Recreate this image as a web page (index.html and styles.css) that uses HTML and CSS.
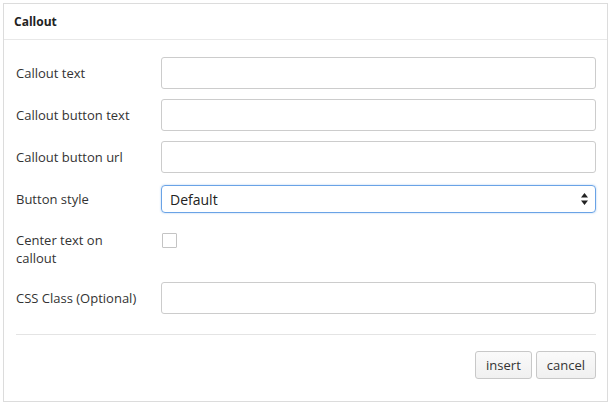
FILE: index.html
```html
<!DOCTYPE html>
<html lang="en">
<head>
  <meta charset="UTF-8" />
  <title>Callout</title>
  <link rel="stylesheet" href="styles.css">
</head>
<body>

<div class="panel">
  <div class="panel-header">Callout</div>

  <form class="panel-body">
    <div class="form-row">
      <label for="callout-text">Callout text</label>
      <input type="text" id="callout-text" />
    </div>

    <div class="form-row">
      <label for="button-text">Callout button text</label>
      <input type="text" id="button-text" />
    </div>

    <div class="form-row">
      <label for="button-url">Callout button url</label>
      <input type="text" id="button-url" />
    </div>

    <div class="form-row">
      <label for="button-style">Button style</label>
      <div class="select-box">
        <span>Default</span>
        <svg width="7" height="12" viewBox="0 0 7 12">
          <path d="M3.5 0 L7 4.5 L0 4.5 Z M3.5 12 L7 7.5 L0 7.5 Z" fill="#222"/>
        </svg>
      </div>
    </div>

    <div class="form-row top">
      <label for="center-text">Center text on callout</label>
      <span class="checkbox"></span>
    </div>

    <div class="form-row">
      <label for="css-class">CSS Class (Optional)</label>
      <input type="text" id="css-class" />
    </div>

    <div class="actions">
      <button type="button">insert</button>
      <button type="button">cancel</button>
    </div>
  </form>
</div>

</body>
</html>
```

FILE: styles.css
```css
* {
  box-sizing: border-box;
}

body {
  margin: 0;
  padding: 3px;
  background: #fff;
  font-family: 'Open Sans', 'Liberation Sans', sans-serif;
  color: #333;
}

.panel {
  width: 605px;
  height: 399px;
  border: 1px solid #dcdcdc;
  background: #fff;
}

.panel-header {
  height: 36px;
  padding: 0 10px;
  line-height: 35px;
  font-size: 12px;
  font-weight: 700;
  color: #222;
  border-bottom: 1px solid #e8e8e8;
}

.panel-body {
  padding: 17px 11px 0 12px;
}

.form-row {
  display: flex;
  align-items: center;
  margin-bottom: 10px;
}

.form-row.top {
  align-items: flex-start;
}

.form-row label {
  width: 130px;
  flex-shrink: 0;
  margin-right: 15px;
  padding: 6px 0;
  font-size: 13px;
  line-height: 18px;
}

.form-row.top label {
  padding-bottom: 5px;
}

.form-row input[type="text"] {
  flex: 1;
  height: 32px;
  border: 1px solid #ccc;
  border-radius: 3px;
  background: #fff;
  font: inherit;
}

.select-box {
  flex: 1;
  height: 28px;
  margin: 2px 0;
  display: flex;
  align-items: center;
  justify-content: space-between;
  padding: 0 7px 0 8px;
  border: 1px solid #6aa3e6;
  border-radius: 4px;
  box-shadow: 0 0 2px rgba(80, 150, 230, 0.5);
  font-size: 14px;
  color: #222;
}

.checkbox {
  display: block;
  width: 15px;
  height: 15px;
  margin: 8px 0 0 1px;
  border: 1px solid #c4c4c4;
  border-radius: 1px;
  background: #fff;
}

.actions {
  margin-top: 20px;
  padding-top: 16px;
  border-top: 1px solid #e4e4e4;
  display: flex;
  justify-content: flex-end;
  gap: 4px;
}

.actions button {
  height: 28px;
  padding: 0 10px;
  border: 1px solid #c8c8c8;
  border-radius: 3px;
  background: linear-gradient(#fafafa, #f0f0f0);
  font-family: inherit;
  font-size: 13px;
  color: #333;
}
```
